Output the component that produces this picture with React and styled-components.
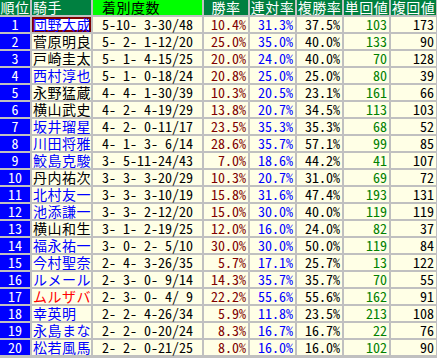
import styled, { createGlobalStyle } from "styled-components";

const GlobalStyle = createGlobalStyle`
  body {
    margin: 0;
    background: #fff;
  }
`;

const jp = `"Noto Sans CJK JP", sans-serif`;
const mono = `"Noto Sans Mono CJK JP", "DejaVu Sans Mono", "Liberation Mono", monospace`;

const nameColors = { blue: "#0000ff", black: "#000000", red: "#ff0000" };

// rank, jockey, name colour, record, win, top2, top3, win return, place return
const rows = [
  [1, "団野大成", "blue", "5-10- 3-30/48", "10.4%", "31.3%", "37.5%", 103, 173],
  [2, "菅原明良", "black", "5- 2- 1-12/20", "25.0%", "35.0%", "40.0%", 133, 90],
  [3, "戸崎圭太", "black", "5- 1- 4-15/25", "20.0%", "24.0%", "40.0%", 70, 128],
  [4, "西村淳也", "blue", "5- 1- 0-18/24", "20.8%", "25.0%", "25.0%", 80, 39],
  [5, "永野猛蔵", "black", "4- 4- 1-30/39", "10.3%", "20.5%", "23.1%", 161, 66],
  [6, "横山武史", "black", "4- 2- 4-19/29", "13.8%", "20.7%", "34.5%", 113, 103],
  [7, "坂井瑠星", "blue", "4- 2- 0-11/17", "23.5%", "35.3%", "35.3%", 68, 52],
  [8, "川田将雅", "blue", "4- 1- 3- 6/14", "28.6%", "35.7%", "57.1%", 99, 85],
  [9, "鮫島克駿", "blue", "3- 5-11-24/43", "7.0%", "18.6%", "44.2%", 41, 107],
  [10, "丹内祐次", "black", "3- 3- 3-20/29", "10.3%", "20.7%", "31.0%", 69, 72],
  [11, "北村友一", "blue", "3- 3- 3-10/19", "15.8%", "31.6%", "47.4%", 193, 131],
  [12, "池添謙一", "blue", "3- 3- 2-12/20", "15.0%", "30.0%", "40.0%", 119, 119],
  [13, "横山和生", "black", "3- 1- 2-19/25", "12.0%", "16.0%", "24.0%", 82, 37],
  [14, "福永祐一", "blue", "3- 0- 2- 5/10", "30.0%", "30.0%", "50.0%", 119, 84],
  [15, "今村聖奈", "blue", "2- 4- 3-26/35", "5.7%", "17.1%", "25.7%", 13, 122],
  [16, "ルメール", "blue", "2- 3- 0- 9/14", "14.3%", "35.7%", "35.7%", 70, 55],
  [17, "ムルザバ", "red", "2- 3- 0- 4/ 9", "22.2%", "55.6%", "55.6%", 162, 91],
  [18, "幸英明", "blue", "2- 2- 4-26/34", "5.9%", "11.8%", "23.5%", 213, 108],
  [19, "永島まな", "blue", "2- 2- 0-20/24", "8.3%", "16.7%", "16.7%", 22, 76],
  [20, "松若風馬", "blue", "2- 2- 0-21/25", "8.0%", "16.0%", "16.0%", 102, 90],
];

const Table = styled.div`
  display: grid;
  grid-template-columns: 30px 59px 109px 44px 45px 45px 45px 45px;
  grid-auto-rows: 15px;
  gap: 2px;
  width: fit-content;
  padding: 0 1px 3px 0;
  background: #c0c0c0;
`;

const RowCells = styled.div`
  display: contents;
`;

const Head = styled.div`
  background: ${(p) => (p.$bright ? "#00ff00" : "#008040")};
  color: ${(p) => (p.$bright ? "#000" : "#fff")};
  font-family: ${jp};
  font-size: 14px;
  line-height: 15px;
  letter-spacing: 0.5px;
  text-align: ${(p) => p.$align || "center"};
  padding-left: ${(p) => p.$indent || 0}px;
  white-space: nowrap;
`;

const Rank = styled.div`
  background: #0000ff;
  color: #fff;
  font-family: ${mono};
  font-size: 14px;
  line-height: 15px;
  text-align: center;
`;

const Jockey = styled.div`
  background: ${(p) => (p.$marked ? "#fff" : "#ffffe6")};
  box-shadow: ${(p) => (p.$marked ? "inset 0 0 0 2px #800000" : "none")};
  color: ${(p) => nameColors[p.$color]};
  font-family: ${jp};
  font-size: 14px;
  line-height: 15px;
  letter-spacing: 0.5px;
  padding-left: 1px;
  white-space: nowrap;
`;

const Cell = styled.div`
  background: #ffffe6;
  color: ${(p) => p.$color || "#000"};
  font-family: ${mono};
  font-size: 14px;
  line-height: 15px;
  text-align: ${(p) => p.$align || "right"};
  padding-right: ${(p) => (p.$align === "center" ? 0 : 2)}px;
  white-space: pre;
`;

export default function App() {
  return (
    <>
      <GlobalStyle />
      <Table>
        <Head>順位</Head>
        <Head $align="left" $indent={1}>騎手</Head>
        <Head $bright $align="left" $indent={9}>着別度数</Head>
        <Head>勝率</Head>
        <Head>連対率</Head>
        <Head>複勝率</Head>
        <Head>単回値</Head>
        <Head>複回値</Head>
        {rows.map(([rank, name, color, record, win, top2, top3, tan, fuku]) => (
          <RowCells key={rank}>
            <Rank>{rank}</Rank>
            <Jockey $color={color} $marked={rank === 1}>{name}</Jockey>
            <Cell $align="center">{record}</Cell>
            <Cell $color="#800000">{win}</Cell>
            <Cell $color="#0000ff">{top2}</Cell>
            <Cell>{top3}</Cell>
            <Cell $color="#008000">{tan}</Cell>
            <Cell>{fuku}</Cell>
          </RowCells>
        ))}
      </Table>
    </>
  );
}
